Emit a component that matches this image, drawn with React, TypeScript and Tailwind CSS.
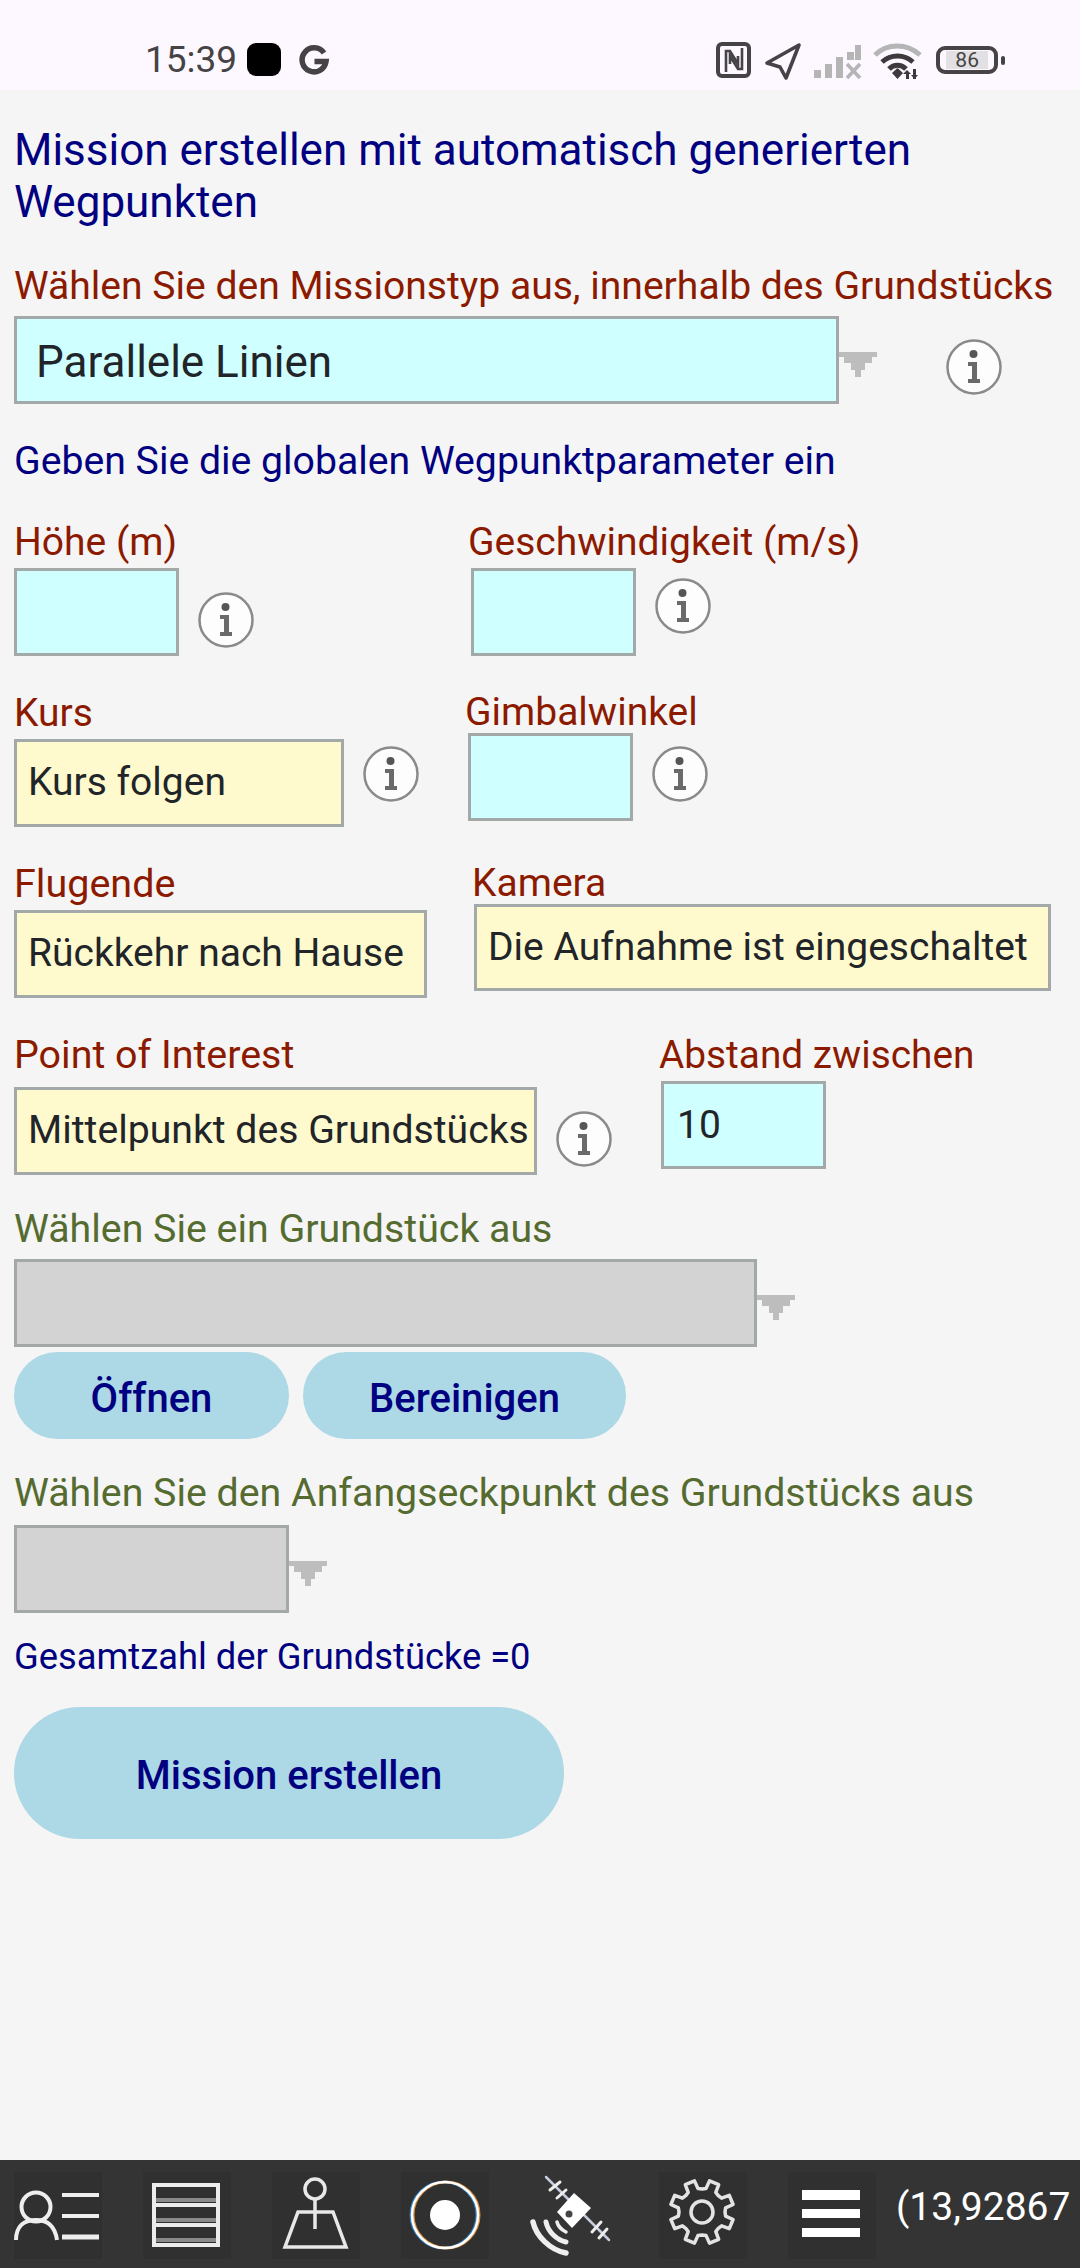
const gearPath = (() => {
  const pts: string[] = [];
  const teeth = 8;
  const rings: [number, number][] = [
    [-0.5, 23],
    [-0.28, 24],
    [-0.2, 32],
    [0.2, 32],
    [0.28, 24],
  ];
  for (let i = 0; i < teeth; i++) {
    const base = ((i + 0.5) / teeth) * Math.PI * 2 - Math.PI / 2;
    for (const [off, r] of rings) {
      const a = base + (off * Math.PI * 2) / teeth;
      pts.push(`${(43 + r * Math.cos(a)).toFixed(1)} ${(40 + r * Math.sin(a)).toFixed(1)}`);
    }
  }
  return "M" + pts.join("L") + "Z";
})();

function Arrow() {
  return (
    <svg width="38" height="25" viewBox="0 0 38 25" className="shrink-0">
      <path d="M0 0H38V5H33V11H26V18H22V25H16V18H12V11H5V5H0Z" fill="#bdbdbd" />
    </svg>
  );
}

function Info({ className }: { className: string }) {
  return (
    <svg width="58" height="58" viewBox="0 0 58 58" className={`shrink-0 ${className}`}>
      <circle cx="29" cy="29" r="26.5" fill="#fdfdfd" stroke="#8a8a8a" strokeWidth="2.500" />
      <circle cx="28.500" cy="16" r="4" fill="#555" />
      <path d="M23 24H32V41H35V45H23V41H27V28H23Z" fill="#6a6a6a" />
    </svg>
  );
}

function Label({ children, className = "text-[39px] h-[46px]" }: { children: React.ReactNode; className?: string }) {
  return <div className={`leading-[48px] whitespace-nowrap text-[#8b1a00] ${className}`}>{children}</div>;
}

function Field({ children, className }: { children?: React.ReactNode; className: string }) {
  return (
    <div className={`shrink-0 border-[3px] border-[#a3a8a8] flex items-center whitespace-nowrap text-[#212529] overflow-hidden ${className}`}>
      {children}
    </div>
  );
}

function StatusBar() {
  return (
    <div className="h-[90px] bg-[#fdf7ff] flex items-start relative shrink-0">
      <span className="ml-[145px] mt-[40px] text-[37px] leading-[40px] text-[#454345]">15:39</span>
      <div className="ml-[10px] mt-[43px] w-[34px] h-[33px] rounded-[9px] bg-black" />
      <svg width="32" height="32" viewBox="0 0 32 32" className="ml-[17px] mt-[45px]">
        <path d="M26 8A12 12 0 1 0 28 16.5H16.5" fill="none" stroke="#454345" strokeWidth="5.5" />
      </svg>
      <svg width="36" height="36" viewBox="0 0 36 36" className="ml-[386px] mt-[42px]">
        <rect x="2" y="2" width="31" height="32" rx="4" fill="none" stroke="#454345" strokeWidth="4" />
        <path d="M10 30V9H14L22 22V14M26 6V27H22L14 14V22" fill="none" stroke="#454345" strokeWidth="2.6" />
      </svg>
      <svg width="40" height="40" viewBox="0 0 40 40" className="ml-[12px] mt-[41px]">
        <path d="M35 4L3 22L16 26L22 37Z" fill="none" stroke="#454345" strokeWidth="3.6" strokeLinejoin="round" />
      </svg>
      <svg width="50" height="36" viewBox="0 0 50 36" className="ml-[9px] mt-[43px]">
        <path d="M1 27h7v8H1zM12 21h7v14h-7zM23 14h7v21h-7zM34 9h7v8h-7zM42 2h6v15h-6z" fill="#b5b5b5" />
        <path d="M34 21L47 35M47 21L34 35" stroke="#b5b5b5" strokeWidth="3.6" />
      </svg>
      <svg width="50" height="40" viewBox="0 0 50 40" className="ml-[10px] mt-[41px]">
        <path d="M2 14C14 2 34 2 47 14" fill="none" stroke="#b5b5b5" strokeWidth="5" />
        <path d="M9 21C18 13 31 13 40 21M16 28C21 23 28 23 33 28" fill="none" stroke="#3c3a3c" strokeWidth="5" />
        <path d="M19 32L24.500 27L30 32L24.500 38Z" fill="#3c3a3c" />
        <path d="M33 31h3v7h-3zM40 28h3v10h-3zM30 33l4 -4l4 4zM38 34h7l-3.500 4z" fill="#3c3a3c" />
      </svg>
      <div className="ml-[13px] mt-[46px] w-[62px] h-[28px] rounded-[9px] border-[4px] border-[#454345] flex items-center justify-center">
        <span className="w-[42px] h-[18px] bg-[#e2e0e2] flex items-center justify-center text-[21px] leading-[18px] text-[#454345]">86</span>
      </div>
      <div className="ml-[3px] mt-[56px] w-[4px] h-[9px] rounded-[2px] bg-[#454345]" />
    </div>
  );
}

function Tile({ children, dark = true }: { children: React.ReactNode; dark?: boolean }) {
  return (
    <svg
      width="88"
      height="87"
      viewBox="0 0 88 87"
      className={`shrink-0 ${dark ? "bg-[#303030]" : ""}`}
    >
      {children}
    </svg>
  );
}

function BottomBar() {
  return (
    <div className="h-[108px] bg-[#343434] shrink-0 flex items-start pt-[12px] pl-[14px] gap-[41px] overflow-hidden">
      <Tile>
        <g fill="none" stroke="#eeeeee">
          <circle cx="22" cy="35" r="14.500" strokeWidth="4" />
          <path d="M2 68C2 54 10 48 22 48C34 48 41 54 43 68" strokeWidth="4" />
          <path d="M48 23H85" strokeWidth="4" />
          <path d="M48 44H85" strokeWidth="4" />
          <path d="M48 65H85" strokeWidth="5" />
        </g>
      </Tile>
      <Tile>
        <g fill="none">
          <path d="M11 28H75M11 48H75M11 68H75" stroke="#8a8a8a" strokeWidth="4" />
          <path d="M11 13H75V73H11ZM11 33H75M11 53H75" stroke="#ececec" strokeWidth="4" />
        </g>
      </Tile>
      <Tile>
        <g fill="none" stroke="#e8e8e8" strokeWidth="3.500">
          <circle cx="43" cy="17" r="10" />
          <path d="M43 27V57" />
          <path d="M26 40H61L74 75H13Z" />
        </g>
      </Tile>
      <Tile>
        <g fill="none" strokeWidth="3">
          <circle cx="43" cy="43" r="33" stroke="#2f7fc4" />
          <circle cx="45" cy="43" r="33" stroke="#d9913f" />
          <circle cx="44" cy="43" r="33" stroke="#ffffff" strokeWidth="2.500" />
        </g>
        <circle cx="44" cy="43" r="15" fill="#ffffff" />
      </Tile>
      <Tile dark={false}>
        <g fill="none" stroke="#eeeeee" strokeLinecap="round">
          <path d="M16 5L79 68" strokeWidth="2.500" stroke="#c8cce0" />
          <path d="M20 18L30 10M27 26L36 18M62 60L71 50M69 66L77 57" strokeWidth="3" />
          <path d="M3 50C6 64 20 78 36 81" strokeWidth="5.500" />
          <path d="M16 50C18 60 27 68 36 70" strokeWidth="5" />
          <path d="M27 50C28 54 32 58 36 60" strokeWidth="3.500" />
        </g>
        <path d="M44 21L61 36L42 56L27 40Z" fill="#ffffff" />
        <circle cx="39" cy="42" r="3.500" fill="#444" />
      </Tile>
      <Tile>
        <path d={gearPath} fill="none" stroke="#e4e4e4" strokeWidth="3.500" strokeLinejoin="round" />
        <circle cx="43" cy="40" r="11" fill="none" stroke="#e4e4e4" strokeWidth="3.500" />
      </Tile>
      <Tile>
        <path d="M14 18H72V28H14ZM14 37H72V46H14ZM14 56H72V65H14Z" fill="#ffffff" />
      </Tile>
      <span className="-ml-[21px] mt-[13px] text-[39px] leading-[44px] text-white whitespace-nowrap">(13,92867</span>
    </div>
  );
}

export default function App() {
  return (
    <div className="w-[1080px] h-[2268px] flex flex-col bg-[#f5f5f5] font-['Roboto',sans-serif] overflow-hidden">
      <StatusBar />
      <main className="flex-1 px-[14px] flex flex-col items-start">
        <h1 className="mt-[34px] w-[1000px] text-[44px] leading-[52px] font-normal text-[#000080]">
          Mission erstellen mit automatisch generierten Wegpunkten
        </h1>

        <Label className="mt-[34px] h-[46px] text-[39.1px]">Wählen Sie den Missionstyp aus, innerhalb des Grundstücks</Label>
        <div className="mt-[8px] flex items-start">
          <Field className="w-[825px] h-[88px] bg-[#d0ffff] pl-[19px] pt-[3px] text-[44px]">Parallele Linien</Field>
          <div className="mt-[36px]"><Arrow /></div>
          <Info className="ml-[68px] mt-[22px]" />
        </div>

        <p className="mt-[34px] text-[39.2px] leading-[46px] text-[#000080]">Geben Sie die globalen Wegpunktparameter ein</p>

        <div className="mt-[34px] flex items-start">
          <div className="w-[454px]">
            <Label>Höhe (m)</Label>
            <div className="mt-[4px] flex items-start">
              <Field className="w-[165px] h-[88px] bg-[#d0ffff]" />
              <Info className="ml-[18px] mt-[23px]" />
            </div>
          </div>
          <div>
            <Label>Geschwindigkeit (m/s)</Label>
            <div className="mt-[4px] ml-[3px] flex items-start">
              <Field className="w-[165px] h-[88px] bg-[#d0ffff]" />
              <Info className="ml-[18px] mt-[9px]" />
            </div>
          </div>
        </div>

        <div className="mt-[34px] flex items-start">
          <div className="w-[451px]">
            <Label className="h-[46px] !leading-[46px] text-[39px]">Kurs</Label>
            <div className="mt-[3px] flex items-start">
              <Field className="w-[330px] h-[88px] bg-[#fffacd] pl-[11px] pb-[2px] text-[39px]">Kurs folgen</Field>
              <Info className="ml-[18px] mt-[6px]" />
            </div>
          </div>
          <div>
            <Label className="mt-[1px] h-[42px] !leading-[42px] text-[39px]">Gimbalwinkel</Label>
            <div className="ml-[3px] flex items-start">
              <Field className="w-[165px] h-[88px] bg-[#d0ffff]" />
              <Info className="ml-[18px] mt-[12px]" />
            </div>
          </div>
        </div>

        <div className="mt-[33px] flex items-start">
          <div className="w-[458px]">
            <Label className="h-[46px] text-[39.5px]">Flugende</Label>
            <div className="mt-[4px]">
              <Field className="w-[413px] h-[88px] bg-[#fffacd] pl-[11px] pb-[2px] text-[39px]">Rückkehr nach Hause</Field>
            </div>
          </div>
          <div>
            <Label className="mt-[1px] h-[43px] !leading-[44px] text-[39px]">Kamera</Label>
            <div className="ml-[2px]">
              <Field className="w-[577px] h-[87px] bg-[#fffacd] pl-[11px] text-[39px]">Die Aufnahme ist eingeschaltet</Field>
            </div>
          </div>
        </div>

        <div className="mt-[33px] flex items-start">
          <div className="w-[645px]">
            <Label className="h-[46px] text-[39.4px]">Point of Interest</Label>
            <div className="mt-[10px] flex items-start">
              <Field className="w-[523px] h-[88px] bg-[#fffacd] pl-[11px] pb-[2px] text-[39.2px]">Mittelpunkt des Grundstücks</Field>
              <Info className="ml-[18px] mt-[23px]" />
            </div>
          </div>
          <div>
            <Label className="h-[46px] text-[38.8px]">Abstand zwischen</Label>
            <div className="mt-[4px] ml-[2px]">
              <Field className="w-[165px] h-[88px] bg-[#d0ffff] pl-[13px] text-[39px]">10</Field>
            </div>
          </div>
        </div>

        <Label className="mt-[30px] h-[46px] text-[39.3px] !text-[#556b2f]">Wählen Sie ein Grundstück aus</Label>
        <div className="mt-[8px] flex items-start">
          <Field className="w-[743px] h-[88px] bg-[#d3d3d3]" />
          <div className="mt-[36px]"><Arrow /></div>
        </div>
        <div className="mt-[5px] flex gap-[14px]">
          <button className="w-[275px] h-[87px] rounded-[44px] bg-[#add8e6] pt-[6px] text-[40px] font-medium text-[#000080]">Öffnen</button>
          <button className="w-[323px] h-[87px] rounded-[44px] bg-[#add8e6] pt-[6px] text-[40px] font-medium text-[#000080]">Bereinigen</button>
        </div>

        <Label className="mt-[30px] h-[46px] text-[39.3px] !text-[#556b2f]">Wählen Sie den Anfangseckpunkt des Grundstücks aus</Label>
        <div className="mt-[10px] flex items-start">
          <Field className="w-[275px] h-[88px] bg-[#d3d3d3]" />
          <div className="mt-[36px]"><Arrow /></div>
        </div>

        <p className="mt-[24px] text-[36.3px] leading-[40px] text-[#000080]">Gesamtzahl der Grundstücke =0</p>

        <button className="mt-[30px] w-[550px] h-[132px] rounded-[66px] bg-[#add8e6] pt-[5px] text-[40px] font-medium text-[#000080]">Mission erstellen</button>
      </main>
      <BottomBar />
    </div>
  );
}
